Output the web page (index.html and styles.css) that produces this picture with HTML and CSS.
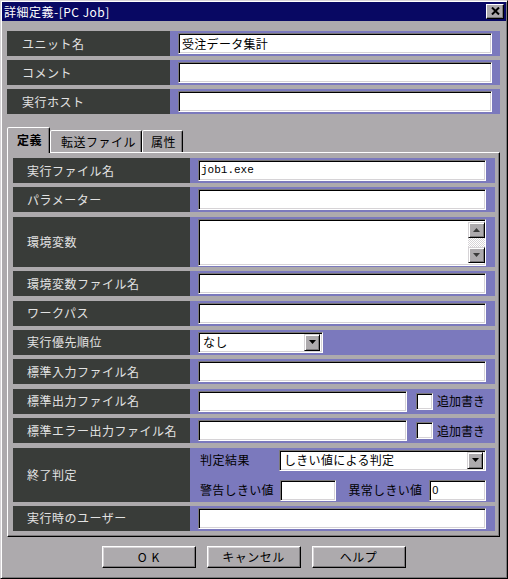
FILE: index.html
```html
<!DOCTYPE html>
<html lang="ja">
<head>
<meta charset="utf-8">
<title>詳細定義-[PC Job]</title>
<link rel="stylesheet" href="styles.css">
</head>
<body>
<div class="window">
  <div class="titlebar">
    <span class="title">詳細定義-[PC Job]</span>
    <span class="close-btn"><svg width="9" height="8" viewBox="0 0 9 8"><path d="M1 0.5 L8 7.5 M8 0.5 L1 7.5" stroke="#000" stroke-width="2"/></svg></span>
  </div>
  <div class="content">
    <div class="top-rows">
      <div class="row">
        <div class="label">ユニット名</div>
        <div class="field"><div class="input grow">受注データ集計</div></div>
      </div>
      <div class="row">
        <div class="label">コメント</div>
        <div class="field"><div class="input grow"></div></div>
      </div>
      <div class="row">
        <div class="label">実行ホスト</div>
        <div class="field"><div class="input grow"></div></div>
      </div>
    </div>

    <div class="tabs">
      <div class="tab tab-def active">定義</div>
      <div class="tab tab-xfer">転送ファイル</div>
      <div class="tab tab-attr">属性</div>
    </div>

    <div class="panel">
      <div class="prow">
        <div class="label">実行ファイル名</div>
        <div class="field"><div class="input grow mono">job1.exe</div></div>
      </div>
      <div class="prow">
        <div class="label">パラメーター</div>
        <div class="field"><div class="input grow"></div></div>
      </div>
      <div class="prow tall">
        <div class="label">環境変数</div>
        <div class="field">
          <div class="input grow textarea">
            <div class="ta-body"></div>
            <div class="scrollbar">
              <div class="sb-btn"><svg width="7" height="4" viewBox="0 0 7 4"><path d="M3.5 0 L7 4 L0 4 Z" fill="#3a3a3a"/></svg></div>
              <div class="sb-track"></div>
              <div class="sb-btn"><svg width="7" height="4" viewBox="0 0 7 4"><path d="M0 0 L7 0 L3.5 4 Z" fill="#3a3a3a"/></svg></div>
            </div>
          </div>
        </div>
      </div>
      <div class="prow">
        <div class="label">環境変数ファイル名</div>
        <div class="field"><div class="input grow"></div></div>
      </div>
      <div class="prow">
        <div class="label">ワークパス</div>
        <div class="field"><div class="input grow"></div></div>
      </div>
      <div class="prow">
        <div class="label">実行優先順位</div>
        <div class="field">
          <div class="input select sel-prio">
            <span class="sel-text">なし</span>
            <span class="dd-btn"><svg width="7" height="4" viewBox="0 0 7 4"><path d="M0 0 L7 0 L3.5 4 Z" fill="#000"/></svg></span>
          </div>
        </div>
      </div>
      <div class="prow">
        <div class="label">標準入力ファイル名</div>
        <div class="field"><div class="input grow"></div></div>
      </div>
      <div class="prow">
        <div class="label">標準出力ファイル名</div>
        <div class="field">
          <div class="input out-input"></div>
          <span class="checkbox"></span>
          <span class="cb-text">追加書き</span>
        </div>
      </div>
      <div class="prow">
        <div class="label">標準エラー出力ファイル名</div>
        <div class="field">
          <div class="input out-input"></div>
          <span class="checkbox"></span>
          <span class="cb-text">追加書き</span>
        </div>
      </div>
      <div class="prow judge">
        <div class="label">終了判定</div>
        <div class="field judge-field">
          <div class="jline">
            <span class="jlabel">判定結果</span>
            <div class="input select grow">
              <span class="sel-text">しきい値による判定</span>
              <span class="dd-btn"><svg width="7" height="4" viewBox="0 0 7 4"><path d="M0 0 L7 0 L3.5 4 Z" fill="#000"/></svg></span>
            </div>
          </div>
          <div class="jline">
            <span class="jtext">警告しきい値</span>
            <div class="input small-in warn-in"></div>
            <span class="jtext abn">異常しきい値</span>
            <div class="input small-in abn-in">0</div>
          </div>
        </div>
      </div>
      <div class="prow">
        <div class="label">実行時のユーザー</div>
        <div class="field"><div class="input grow"></div></div>
      </div>
    </div>

    <div class="buttons">
      <div class="btn btn-ok">OK</div>
      <div class="btn">キャンセル</div>
      <div class="btn">ヘルプ</div>
    </div>
  </div>
</div>
</body>
</html>
```

FILE: styles.css
```css
* {
  box-sizing: border-box;
}

html, body {
  margin: 0;
  padding: 0;
}

body {
  width: 508px;
  height: 579px;
  background: #adaaad;
  font-family: "Noto Sans CJK JP", "Noto Sans", sans-serif;
  font-size: 12px;
  line-height: 1;
  color: #000;
}

.window {
  width: 508px;
  height: 579px;
  background: #adaaad;
  border: 1px solid;
  border-color: #d6d3d6 #000 #000 #d6d3d6;
  box-shadow: inset 1px 1px #fff, inset -1px -1px #7b797b;
  padding: 1px;
  display: flex;
  flex-direction: column;
}

.titlebar {
  height: 19px;
  background: #080863;
  color: #fff;
  display: flex;
  align-items: center;
  justify-content: space-between;
  padding: 0 2px 0 2px;
  flex-shrink: 0;
}

.title {
  font-size: 12px;
  letter-spacing: 0.5px;
}

.close-btn {
  width: 18px;
  height: 15px;
  background: #adaaad;
  border: 1px solid;
  border-color: #fff #000 #000 #fff;
  box-shadow: inset -1px -1px #7b797b;
  display: flex;
  align-items: center;
  justify-content: center;
  padding-bottom: 1px;
}

.content {
  flex: 1;
  padding: 10px 6px 0 5px;
  display: flex;
  flex-direction: column;
}

.top-rows {
  display: flex;
  flex-direction: column;
  gap: 4px;
}

.row {
  display: flex;
  height: 25px;
}

.label {
  background: #393c39;
  color: #e2e2e2;
  display: flex;
  align-items: center;
  letter-spacing: 0.5px;
  flex-shrink: 0;
}

.row .label {
  width: 163px;
  padding-left: 15px;
}

.field {
  flex: 1;
  background: #7b79bd;
  display: flex;
  align-items: center;
  min-width: 0;
}

.row .field {
  padding: 0 8px;
}

.input {
  height: 21px;
  background: #fff;
  border: 1px solid;
  border-color: #7b797b #fff #fff #7b797b;
  box-shadow: inset 1px 1px #000, inset -1px -1px #d6d3d6;
  display: flex;
  align-items: center;
  padding-left: 3px;
  font-size: 12px;
  letter-spacing: 0.3px;
  white-space: nowrap;
  overflow: hidden;
}

.grow {
  flex: 1;
}

.mono {
  font-family: "Liberation Mono", "DejaVu Sans Mono", monospace;
  font-size: 11px;
  letter-spacing: 0;
  padding-left: 2px;
}

/* tabs */
.tabs {
  display: flex;
  align-items: flex-end;
  height: 25px;
  margin-top: 13px;
  position: relative;
  z-index: 1;
}

.tab {
  height: 22px;
  background: #adaaad;
  border: 1px solid;
  border-bottom: none;
  border-color: #fff #000 transparent #fff;
  box-shadow: inset -1px 0 #7b797b;
  border-radius: 2px 2px 0 0;
  display: flex;
  align-items: center;
  letter-spacing: 0.5px;
  padding-top: 1px;
}

.tab.active {
  height: 26px;
  margin-bottom: -1px;
  font-weight: bold;
  padding-top: 0;
  padding-bottom: 2px;
}

.tab-def {
  width: 43px;
  padding-left: 9px;
}

.tab-xfer {
  width: 92px;
  padding-left: 10px;
}

.tab-attr {
  width: 41px;
  padding-left: 8px;
}

.panel {
  height: 385px;
  border: 1px solid;
  border-color: #fff #000 #000 #fff;
  box-shadow: inset -1px -1px #7b797b;
  padding: 5px 4px 5px 5px;
  display: flex;
  flex-direction: column;
  gap: 4.4px;
}

.prow {
  display: flex;
  height: 25px;
  flex-shrink: 0;
}

.prow.tall {
  height: 50px;
}

.prow.judge {
  height: 54px;
}

.prow .label {
  width: 177px;
  padding-left: 14px;
}

.prow .field {
  padding: 0 9px 0 8px;
}

/* textarea */
.textarea {
  height: 47px;
  align-items: stretch;
  padding: 2px 0 2px 2px;
  margin-top: 1px;
}

.ta-body {
  flex: 1;
}

.scrollbar {
  width: 17px;
  display: flex;
  flex-direction: column;
}

.sb-btn {
  height: 16px;
  background: #adaaad;
  border: 1px solid;
  border-color: #d6d3d6 #000 #000 #d6d3d6;
  box-shadow: inset 1px 1px #fff, inset -1px -1px #7b797b;
  display: flex;
  align-items: center;
  justify-content: center;
}

.sb-track {
  flex: 1;
  background: repeating-conic-gradient(#fff 0 25%, #d6d3d6 0 50%) 0 0 / 2px 2px;
}

/* select */
.select {
  padding-right: 2px;
  justify-content: space-between;
}

.sel-prio {
  width: 125px;
}

.sel-text {
  padding-left: 1px;
}

.dd-btn {
  width: 16px;
  height: 17px;
  background: #adaaad;
  border: 1px solid;
  border-color: #d6d3d6 #000 #000 #d6d3d6;
  box-shadow: inset 1px 1px #fff, inset -1px -1px #7b797b;
  display: flex;
  align-items: center;
  justify-content: center;
  flex-shrink: 0;
}

/* checkbox rows */
.out-input {
  width: 209px;
}

.checkbox {
  width: 17px;
  height: 17px;
  margin-left: 9px;
  background: #fff;
  border: 1px solid;
  border-color: #7b797b #fff #fff #7b797b;
  box-shadow: inset 1px 1px #000, inset -1px -1px #d6d3d6;
  flex-shrink: 0;
}

.cb-text {
  margin-left: 4px;
  letter-spacing: 0;
}

/* exit judgement */
.judge-field {
  flex-direction: column;
  align-items: stretch;
  justify-content: flex-start;
  gap: 9px;
}

.prow .judge-field {
  padding: 2px 9px 1px 10px;
}

.jline {
  display: flex;
  align-items: center;
}

.jlabel {
  width: 79px;
  letter-spacing: 0.5px;
  flex-shrink: 0;
}

.jtext {
  letter-spacing: 0.3px;
  flex-shrink: 0;
}

.small-in {
  padding-left: 2px;
  font-family: "Liberation Sans", sans-serif;
  font-size: 11px;
}

.warn-in {
  width: 56px;
  margin-left: 6px;
}

.abn {
  margin-left: 13px;
}

.abn-in {
  width: 57px;
  margin-left: 7px;
}

/* buttons */
.buttons {
  display: flex;
  justify-content: center;
  gap: 11px;
  margin-top: 9px;
}

.btn {
  width: 94px;
  height: 22px;
  background: #adaaad;
  border: 1px solid;
  border-color: #fff #000 #000 #fff;
  box-shadow: inset -1px -1px #7b797b, inset 1px 1px #d6d3d6;
  display: flex;
  align-items: center;
  justify-content: center;
  letter-spacing: 0.5px;
}

.btn-ok {
  letter-spacing: 5px;
  padding-left: 5px;
}
```
